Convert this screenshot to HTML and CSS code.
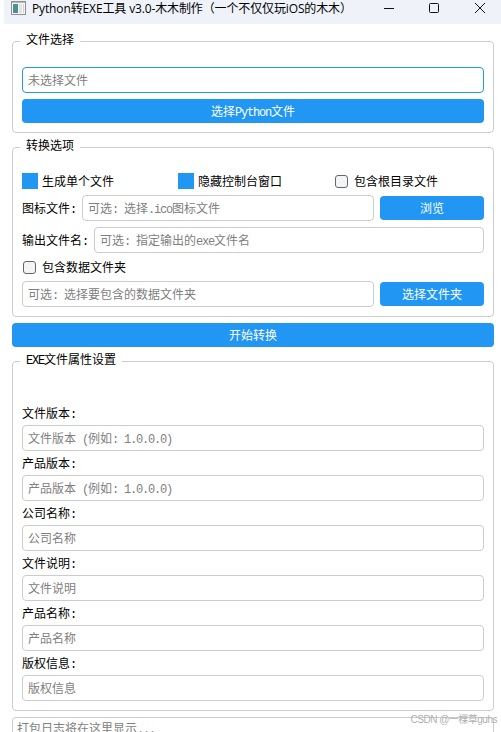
FILE: index.html
```html
<!DOCTYPE html>
<html lang="zh-CN">
<head>
  <meta charset="UTF-8" />
  <meta name="viewport" content="width=device-width, initial-scale=1.0"/>
  <title>Python转EXE工具</title>
  <link rel="stylesheet" href="styles.css">
</head>
<body>

  <header class="titlebar">
    <svg class="app-icon" width="15" height="14" viewBox="0 0 15 14">
      <rect x="0.5" y="0.5" width="14" height="13" fill="#f4f6f7" stroke="#8b9196"/>
      <path d="M1 1.5h13" stroke="#b5babd"/>
      <rect x="2" y="3" width="5" height="9" fill="#4f9488"/>
      <rect x="2" y="8" width="5" height="4" fill="#5686a5"/>
      <rect x="8" y="3" width="3" height="9" fill="#dfe3e4"/>
      <rect x="12" y="3" width="1" height="9" fill="#cfd3d5"/>
    </svg>
    <h1>Python转EXE工具 v3.0-木木制作（一个不仅仅玩iOS的木木）</h1>
    <svg class="controls" width="102" height="12" viewBox="0 0 102 12" fill="none" stroke="#111">
      <path d="M0 6.5h10"/>
      <rect x="45.5" y="1.5" width="9" height="9" rx="1"/>
      <path d="M91 1l10 10M101 1L91 11"/>
    </svg>
  </header>

  <main class="content">
    <section class="group file-group">
      <h2>文件选择</h2>
      <div class="field active">未选择文件</div>
      <button type="button">选择<span class="en">Python</span>文件</button>
    </section>

    <section class="group options-group">
      <h2>转换选项</h2>
      <div class="checks">
        <label class="check"><i class="box checked"></i>生成单个文件</label>
        <label class="check"><i class="box checked"></i>隐藏控制台窗口</label>
        <label class="check"><i class="box"></i>包含根目录文件</label>
      </div>
      <div class="row">
        <label>图标文件<span class="en">:</span></label>
        <div class="field">可选<span class="en">: </span>选择<span class="en">.ico</span>图标文件</div>
        <button type="button">浏览</button>
      </div>
      <div class="row">
        <label>输出文件名<span class="en">:</span></label>
        <div class="field">可选<span class="en">: </span>指定输出的<span class="en">exe</span>文件名</div>
      </div>
      <label class="check"><i class="box"></i>包含数据文件夹</label>
      <div class="row">
        <div class="field">可选<span class="en">: </span>选择要包含的数据文件夹</div>
        <button type="button">选择文件夹</button>
      </div>
    </section>

    <button type="button">开始转换</button>

    <section class="group props-group">
      <h2><span class="en">EXE</span>文件属性设置</h2>
      <label>文件版本<span class="en">:</span></label>
      <div class="field">文件版本<span class="en"> (</span>例如<span class="en">: 1.0.0.0)</span></div>
      <label>产品版本<span class="en">:</span></label>
      <div class="field">产品版本<span class="en"> (</span>例如<span class="en">: 1.0.0.0)</span></div>
      <label>公司名称<span class="en">:</span></label>
      <div class="field">公司名称</div>
      <label>文件说明<span class="en">:</span></label>
      <div class="field">文件说明</div>
      <label>产品名称<span class="en">:</span></label>
      <div class="field">产品名称</div>
      <label>版权信息<span class="en">:</span></label>
      <div class="field">版权信息</div>
    </section>

    <div class="log">打包日志将在这里显示<span class="en">...</span></div>
  </main>

  <div class="watermark">CSDN @一棵草guhs</div>

</body>
</html>
```

FILE: styles.css
```css
* {
  box-sizing: border-box;
}

body {
  position: relative;
  margin: 0;
  height: 732px;
  overflow: hidden;
  background: #fff;
  color: #000;
  font-family: "Noto Sans CJK SC", sans-serif;
  font-size: 12px;
  line-height: 14px;
  white-space: nowrap;
}

/* half-width characters, 6px each */
.en {
  font-family: "Liberation Mono", monospace;
  font-size: 12px;
  line-height: 1;
  letter-spacing: -1.2px;
  white-space: pre;
}

.titlebar {
  display: flex;
  align-items: flex-start;
  height: 24px;
  margin-left: 4px;
  padding: 0 15px 0 7px;
  background: #eff3f9;
}

.app-icon {
  margin-top: 1px;
}

.titlebar h1 {
  margin: 1px 0 0 6px;
  font-family: "Open Sans", "Noto Sans CJK SC", sans-serif;
  font-size: 12px;
  font-weight: normal;
  letter-spacing: -0.13px;
  line-height: 16px;
}

.controls {
  margin: 2px 0 0 auto;
}

.content {
  display: flex;
  flex-direction: column;
  padding: 17px 7px 0 12px;
}

.group {
  display: flex;
  flex-direction: column;
  border: 1px solid #ccc;
  border-radius: 4px;
  padding: 0 9px 9px;
}

h2 {
  align-self: flex-start;
  height: 14px;
  margin: -10px 0 0 -2px;
  padding: 0 6px;
  background: #fff;
  font-size: 12px;
  font-weight: normal;
  line-height: 14px;
}

.file-group {
  height: 92px;
  gap: 6px;
  margin-bottom: 14px;
}

.file-group h2 {
  margin-bottom: 15px;
}

.field {
  height: 26px;
  border: 1px solid #ccc;
  border-radius: 4px;
  padding: 0 5px;
  color: #808080;
  line-height: 24px;
}

.field.active {
  border-color: #2196f3;
}

button {
  height: 24px;
  border: none;
  border-radius: 4px;
  padding: 0;
  background: #2196f3;
  color: #fff;
  font: inherit;
  line-height: 24px;
}

.options-group {
  height: 170px;
  gap: 6px;
  margin-bottom: 6px;
}

.options-group h2 {
  margin-bottom: 15px;
}

.checks {
  display: grid;
  grid-template-columns: 156px 156px 1fr;
}

.check {
  display: flex;
  align-items: center;
  gap: 4px;
  height: 16px;
}

.box {
  width: 13px;
  height: 13px;
  margin: 0 2px 0 1px;
  border: 1px solid #666;
  border-radius: 3px;
  background: #f2f4f6;
}

.box.checked {
  width: 16px;
  height: 16px;
  margin: 0;
  border: none;
  border-radius: 0;
  background: #2196f3;
}

.row {
  display: flex;
  align-items: center;
  gap: 6px;
}

.row .field {
  flex: 1;
}

.row button {
  width: 104px;
}

.props-group {
  height: 350px;
  margin: 14px 0 6px;
}

.props-group h2 {
  margin-bottom: 35px;
}

.props-group label {
  height: 24px;
  line-height: 24px;
}

.log {
  height: 40px;
  border: 1px solid #ccc;
  border-radius: 4px;
  padding: 3px 4px;
  color: #808080;
}

.watermark {
  position: absolute;
  right: 4px;
  top: 713px;
  color: #b0b0b0;
  font-family: "Liberation Sans", "Noto Sans CJK SC", sans-serif;
  font-size: 10px;
  letter-spacing: -0.5px;
}
```
